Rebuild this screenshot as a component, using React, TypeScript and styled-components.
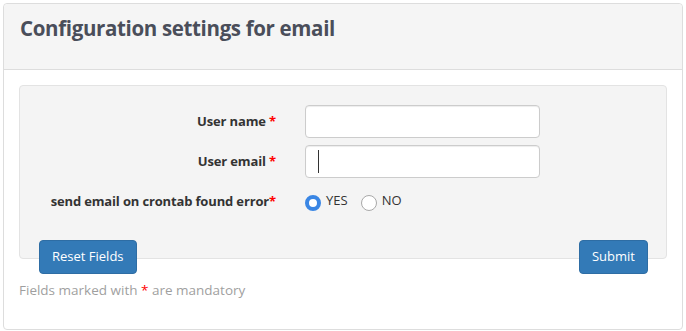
import React from "react";
import styled, { createGlobalStyle } from "styled-components";

const Global = createGlobalStyle`
  html, body {
    margin: 0;
    padding: 0;
    background: #ffffff;
    font-family: "Open Sans", "Noto Sans", sans-serif;
    color: #333333;
  }
  * { box-sizing: border-box; }
`;

const App = () => {
  return (
    <>
      <Global />
      <Panel>
        <Header>
          <Title>Configuration settings for email</Title>
        </Header>
        <Body>
          <Well>
            <FormGrid>
              <Label>
                User name <Star>*</Star>
              </Label>
              <InputBox>
                <Input type="text" />
              </InputBox>
              <Label>
                User email <Star>*</Star>
              </Label>
              <InputBox>
                <Input type="email" />
                <Caret />
              </InputBox>
              <Label $radio>
                send email on crontab found error<Star>*</Star>
              </Label>
              <RadioGroup>
                <RadioItem>
                  <RadioDot $checked />
                  <RadioText>YES</RadioText>
                </RadioItem>
                <RadioItem>
                  <RadioDot />
                  <RadioText>NO</RadioText>
                </RadioItem>
              </RadioGroup>
            </FormGrid>
          </Well>
          <Actions>
            <Button>Reset Fields</Button>
            <Button>Submit</Button>
          </Actions>
          <Note>
            Fields marked with <Star>*</Star> are mandatory
          </Note>
        </Body>
      </Panel>
    </>
  );
};

export default App;

const Panel = styled.div`
  margin: 3px 3px 0 3px;
  width: 680px;
  height: 327px;
  border: 1px solid #dddddd;
  border-radius: 4px;
  background: #ffffff;
  display: flex;
  flex-direction: column;
`;

const Header = styled.div`
  height: 66px;
  background: #f5f5f5;
  border-bottom: 1px solid #dddddd;
  border-radius: 4px 4px 0 0;
  padding: 10px 16px 0 16px;
`;

const Title = styled.h3`
  margin: 0;
  font-size: 20.5px;
  font-weight: 700;
  color: #4a4e5a;
  letter-spacing: -0.35px;
`;

const Body = styled.div`
  padding: 15px 15px 0 15px;
  display: flex;
  flex-direction: column;
`;

const Well = styled.div`
  height: 174px;
  background: #f4f4f4;
  border: 1px solid #e3e3e3;
  border-radius: 4px;
  padding-top: 19px;
`;

const FormGrid = styled.div`
  display: grid;
  grid-template-columns: 256px 235px;
  column-gap: 29px;
  row-gap: 7px;
  align-items: center;
`;

const Label = styled.div<{ $radio?: boolean }>`
  text-align: right;
  font-size: 13px;
  font-weight: 700;
  color: #333333;
  letter-spacing: -0.15px;
  margin-top: ${(p) => (p.$radio ? "6px" : "-2px")};
`;

const Star = styled.span`
  color: #ff0000;
`;

const InputBox = styled.div`
  position: relative;
  height: 33px;
`;

const Input = styled.input`
  width: 100%;
  height: 33px;
  border: 1px solid #cccccc;
  border-radius: 4px;
  background: #ffffff;
  box-shadow: inset 0 1px 1px rgba(0, 0, 0, 0.075);
  outline: none;
  padding: 6px 12px;
  font-size: 14px;
`;

const Caret = styled.span`
  position: absolute;
  left: 13px;
  top: 5px;
  width: 1px;
  height: 23px;
  background: #333333;
`;

const RadioGroup = styled.div`
  display: flex;
  gap: 13px;
  margin-top: 6px;
`;

const RadioItem = styled.label`
  display: flex;
  align-items: flex-start;
  gap: 5px;
`;

const RadioDot = styled.span<{ $checked?: boolean }>`
  width: 16px;
  height: 16px;
  margin-top: 4px;
  border-radius: 50%;
  background: #ffffff;
  border: ${(p) => (p.$checked ? "4px solid #3a86e4" : "1px solid #a9a9a9")};
`;

const RadioText = styled.span`
  font-size: 13px;
  color: #333333;
  line-height: 18px;
`;

const Actions = styled.div`
  display: flex;
  justify-content: space-between;
  padding: 0 19px 0 20px;
  margin-top: -19px;
`;

const Button = styled.button`
  height: 34px;
  padding: 0 12px 3px 12px;
  background: #337ab7;
  border: 1px solid #2e6da4;
  border-radius: 4px;
  color: #ffffff;
  font-family: "Open Sans", "Noto Sans", sans-serif;
  font-size: 13px;
`;

const Note = styled.p`
  margin: 6px 0 0 0;
  font-size: 13.5px;
  color: #9f9f9f;
  line-height: 20px;
`;
